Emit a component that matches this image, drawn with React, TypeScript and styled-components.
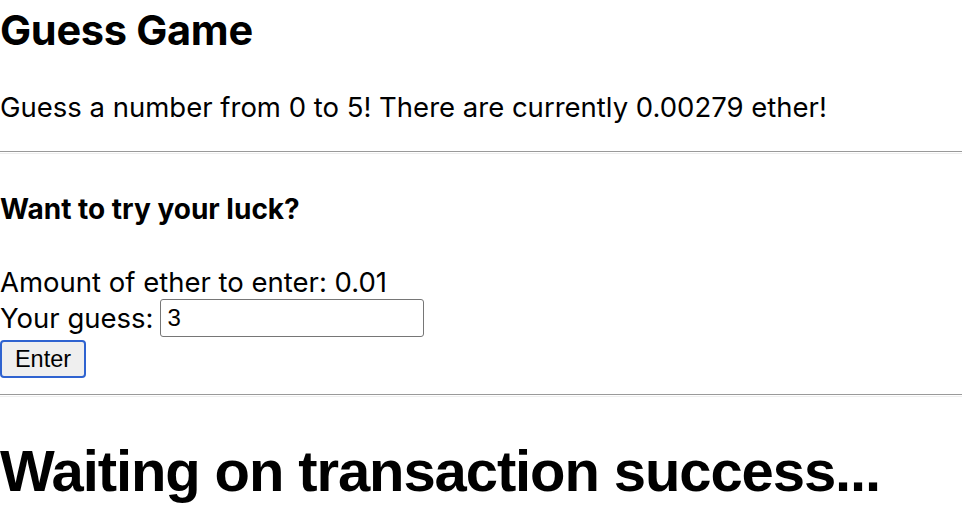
import React, { useState } from "react";
import styled, { createGlobalStyle } from "styled-components";

const GlobalStyle = createGlobalStyle`
  html, body {
    margin: 0;
    padding: 0;
    background: #fff;
    color: #000;
    font-family: Inter, "Noto Sans", sans-serif;
  }
`;

const Page = styled.main`
  width: 962px;
  display: flex;
  flex-direction: column;
`;

const Title = styled.h1`
  margin: 5px 0 0;
  font-size: 41.5px;
  line-height: 50px;
  font-weight: 700;
  letter-spacing: -0.3px;
`;

const Intro = styled.p`
  margin: 35px 0 0;
  font-size: 27.5px;
  line-height: 34px;
`;

const Rule = styled.hr`
  width: 100%;
  margin: 0;
  height: 1px;
  border: none;
  border-top: 1px solid #9a9a9a;
  border-bottom: 1px solid #eeeeee;
`;

const SubTitle = styled.h3`
  margin: 0;
  font-size: 28px;
  line-height: 34px;
  font-weight: 700;
`;

const Section = styled.section<{ $top: number; $bottom: number }>`
  display: flex;
  flex-direction: column;
  padding: ${(p) => p.$top}px 0 ${(p) => p.$bottom}px;
`;

const Form = styled.form`
  display: flex;
  flex-direction: column;
  margin-top: 40px;
`;

const Line = styled.div<{ $height: number }>`
  display: flex;
  align-items: center;
  font-size: 27.5px;
  line-height: 32px;
  height: ${(p) => p.$height}px;
`;

const GuessInput = styled.input`
  margin-left: 6px;
  width: 264px;
  height: 38px;
  box-sizing: border-box;
  border: 1px solid #767676;
  border-radius: 3px;
  padding: 0 7px;
  font-family: "Liberation Sans", Arial, sans-serif;
  font-size: 24px;
  color: #000;
  outline: none;
`;

const EnterButton = styled.button`
  align-self: flex-start;
  margin-top: 2px;
  width: 86px;
  height: 38px;
  box-sizing: border-box;
  border: 2.5px solid #2f63d0;
  border-radius: 4px;
  background: #efefef;
  font-family: "Liberation Sans", Arial, sans-serif;
  font-size: 23.5px;
  color: #000;
  padding: 0;
`;

const Status = styled.h1`
  margin: 0;
  font-family: "Liberation Sans", Arial, sans-serif;
  font-size: 58px;
  line-height: 66px;
  font-weight: 700;
  letter-spacing: -1.1px;
  white-space: nowrap;
`;

export default function App() {
  const [guess, setGuess] = useState("3");

  return (
    <>
      <GlobalStyle />
      <Page>
        <Title>Guess Game</Title>
        <Intro>Guess a number from 0 to 5! There are currently 0.00279 ether!</Intro>
        <Section $top={27} $bottom={38}>
          <Rule />
        </Section>
        <SubTitle>Want to try your luck?</SubTitle>
        <Form onSubmit={(e) => e.preventDefault()}>
          <Line $height={32}>Amount of ether to enter: 0.01</Line>
          <Line $height={40}>
            Your guess:
            <GuessInput value={guess} onChange={(e) => setGuess(e.target.value)} />
          </Line>
          <EnterButton type="submit">Enter</EnterButton>
        </Form>
        <Section $top={16} $bottom={41}>
          <Rule />
        </Section>
        <Status>Waiting on transaction success...</Status>
      </Page>
    </>
  );
}
